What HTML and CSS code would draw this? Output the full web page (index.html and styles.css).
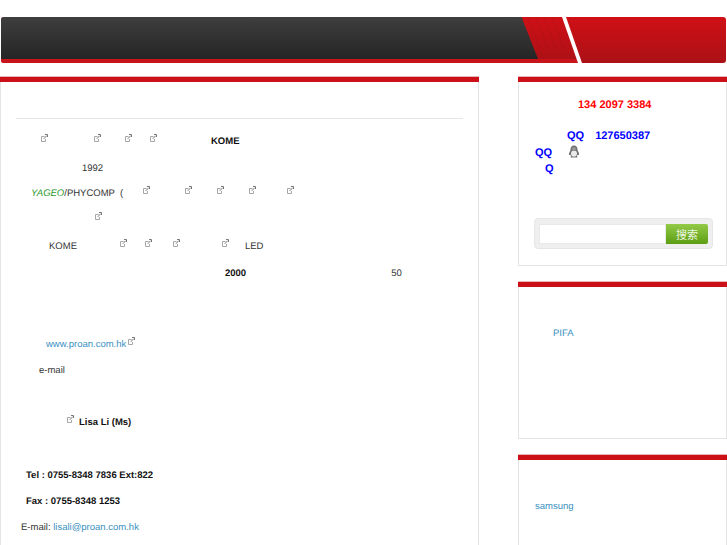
FILE: index.html
```html
<!DOCTYPE html>
<html>
<head>
  <meta charset="UTF-8">
  <title>Proan</title>
  <link rel="stylesheet" href="styles.css">
</head>
<body>
  <svg class="sprite">
    <symbol id="ext" viewBox="0 0 7 8">
      <path d="M3.500 2.500H.5V7.500H4.500V5" fill="none" stroke="#a6a6a6"/>
      <path d="M2.800 4.800L5.800 1.600" fill="none" stroke="#777"/>
      <path d="M4 .5H6.500V3" fill="none" stroke="#777"/>
    </symbol>
  </svg>

  <svg class="banner" viewBox="0 0 725 46" preserveAspectRatio="none">
    <defs>
      <linearGradient id="darkFill" x1="0" y1="0" x2="0" y2="1">
        <stop offset="0" stop-color="#3d3e3d"/>
        <stop offset="1" stop-color="#242524"/>
      </linearGradient>
      <linearGradient id="redFill" x1="0" y1="0" x2="0" y2="1">
        <stop offset="0" stop-color="#cf1016"/>
        <stop offset="1" stop-color="#ab1116"/>
      </linearGradient>
    </defs>
    <rect width="725" height="46" rx="3" fill="url(#redFill)"/>
    <path d="M0 3a3 3 0 0 1 3-3H520.500L537 42H0z" fill="url(#darkFill)"/>
    <path d="M0 42H576V46H3a3 3 0 0 1-3-3z" fill="#c8131a"/>
    <path d="M527 0L543 42M535 0L551 42M543 0L559 42M551 0L567 42" stroke="#a91419" stroke-opacity=".45" fill="none"/>
    <path d="M561 0H565L581 46H577z" fill="#fff"/>
  </svg>

  <div class="page">
    <div class="main box">
      <hr class="rule">

      <div class="line first">
        <svg class="ext ml-25"><use href="#ext"/></svg><svg class="ext ml-46"><use href="#ext"/></svg><svg class="ext ml-24"><use href="#ext"/></svg><svg class="ext ml-18"><use href="#ext"/></svg>
        <b class="ml-54">KOME</b>
      </div>
      <div class="line second"><span class="ml-66">1992</span></div>
      <div class="line third">
        <em class="brand ml-15">YAGEO</em><span>/PHYCOMP</span><span class="ml-5">(</span>
        <svg class="ext ml-20"><use href="#ext"/></svg><svg class="ext ml-35"><use href="#ext"/></svg><svg class="ext ml-25"><use href="#ext"/></svg><svg class="ext ml-25"><use href="#ext"/></svg><svg class="ext ml-31"><use href="#ext"/></svg>
      </div>
      <div class="line"><svg class="ext ml-79"><use href="#ext"/></svg></div>
      <div class="line led">
        <span class="ml-33">KOME</span>
        <svg class="ext ml-43"><use href="#ext"/></svg><svg class="ext ml-18"><use href="#ext"/></svg><svg class="ext ml-21"><use href="#ext"/></svg><svg class="ext ml-42"><use href="#ext"/></svg>
        <span class="ml-16">LED</span>
      </div>
      <div class="line years"><b class="ml-209">2000</b><span class="ml-145">50</span></div>

      <div class="line site"><a class="ml-30" href="#">www.proan.com.hk</a><svg class="ext ml-2"><use href="#ext"/></svg></div>
      <div class="line"><span class="ml-23">e-mail</span></div>
      <div class="line contact"><svg class="ext ml-51"><use href="#ext"/></svg><b class="ml-5">Lisa Li (Ms)</b></div>
      <div class="line phone"><b class="ml-10">Tel : 0755-8348 7836 Ext:822</b></div>
      <div class="line"><b class="ml-10">Fax : 0755-8348 1253</b></div>
      <div class="line"><span class="ml-5">E-mail: <a href="#">lisali@proan.com.hk</a></span></div>
    </div>

    <div class="side">
      <div class="box panel-contact">
        <div class="hotline">134 2097 3384</div>
        <div class="qq qq-first"><span>QQ</span><span class="qq-num">127650387</span></div>
        <div class="qq qq-second">
          <span>QQ</span>
          <svg class="penguin" viewBox="0 0 12 13">
            <path d="M6 .5C3.600.5 2.500 2.300 2.500 4.500c0 1-.4 1.700-1 2.800C.8 8.600.7 9.700 1.300 10c.4.100.7-.2 1-.6.200.7.600 1.200 1.100 1.600-.7.300-1 .7-.8 1.200.3.500 2 .5 3.400.2 1.400.3 3.100.3 3.400-.2.200-.5-.1-.9-.8-1.200.5-.4.900-.9 1.100-1.600.3.400.6.700 1 .6.600-.3.500-1.400-.2-2.700-.6-1.100-1-1.800-1-2.800C9.500 2.300 8.400.5 6 .5z" fill="#6f6f6f"/>
            <ellipse cx="6" cy="8.600" rx="3" ry="3.100" fill="#eaeaea"/>
            <ellipse cx="6" cy="3.800" rx="2" ry="1.900" fill="#989898"/>
          </svg>
        </div>
        <div class="qq qq-third">Q</div>
        <form class="search">
          <input class="search-input" type="text">
          <button class="search-btn" type="button">搜索</button>
        </form>
      </div>

      <div class="box panel-pifa"><a href="#">PIFA</a></div>

      <div class="box panel-samsung"><a href="#">samsung</a></div>
    </div>
  </div>
</body>
</html>
```

FILE: styles.css
```css
body {
  margin: 0;
  padding-top: 17px;
  height: 528px;
  overflow: hidden;
  background: #fff;
  color: #333;
  font-family: "Liberation Sans", Arial, sans-serif;
  font-size: 9.5px;
  text-rendering: geometricPrecision;
}
a {
  color: #3a90c0;
  text-decoration: none;
}
.sprite {
  display: none;
}
.banner {
  display: block;
  width: 725px;
  height: 46px;
  margin-left: 1px;
}
.page {
  display: flex;
  align-items: flex-start;
  margin-top: 14px;
}
.box {
  box-sizing: border-box;
  background: #fff;
  box-shadow: 0 -1px 0 #e9b6b8,
    inset 0 5px 0 #cb1018,
    inset 1px 0 0 #e4e4e4,
    inset -1px 0 0 #e4e4e4,
    inset 0 -1px 0 #e4e4e4;
}

/* main column */
.main {
  width: 479px;
  height: 480px;
  padding: 41px 16px 0;
}
.rule {
  height: 1px;
  margin: 0;
  border: 0;
  background: #e6e6e6;
}
.line {
  display: flex;
  align-items: center;
  height: 26px;
  white-space: pre;
}
.first { margin-top: 9px; }
.second { margin-top: 1px; }
.third { margin-top: -1px; }
.led { margin-top: 1px; }
.years { margin-top: 1px; }
.site { margin-top: 45px; }
.contact { margin-top: 26px; }
.phone { margin-top: 27px; }
.line b { color: #111; }
.brand { color: #2d9a2f; }

/* external link icon */
.ext {
  position: relative;
  top: -3px;
  flex: none;
  width: 7px;
  height: 8px;
}

/* spacers between the words */
.ml-2 { margin-left: 2px; }
.ml-5 { margin-left: 5px; }
.ml-10 { margin-left: 10px; }
.ml-15 { margin-left: 15px; }
.ml-16 { margin-left: 16px; }
.ml-18 { margin-left: 18px; }
.ml-20 { margin-left: 20px; }
.ml-21 { margin-left: 21px; }
.ml-23 { margin-left: 23px; }
.ml-24 { margin-left: 24px; }
.ml-25 { margin-left: 25px; }
.ml-30 { margin-left: 30px; }
.ml-31 { margin-left: 31px; }
.ml-33 { margin-left: 33px; }
.ml-35 { margin-left: 35px; }
.ml-42 { margin-left: 42px; }
.ml-43 { margin-left: 43px; }
.ml-46 { margin-left: 46px; }
.ml-51 { margin-left: 51px; }
.ml-54 { margin-left: 54px; }
.ml-66 { margin-left: 66px; }
.ml-79 { margin-left: 79px; }
.ml-145 { margin-left: 145px; }
.ml-209 { margin-left: 209px; }

/* right column */
.side {
  display: flex;
  flex-direction: column;
  gap: 16px;
  width: 209px;
  margin-left: 39px;
}
.panel-contact {
  height: 189px;
  padding: 22px 0 0 16px;
}
.hotline {
  padding-left: 44px;
  color: #f00;
  font-weight: bold;
  font-size: 11px;
}
.qq {
  color: #00f;
  font-weight: bold;
  font-size: 11px;
}
.qq-first { margin-top: 19px; padding-left: 33px; }
.qq-num { margin-left: 11px; }
.qq-second {
  display: flex;
  align-items: center;
  margin-top: 5px;
  padding-left: 1px;
}
.qq-third { margin-top: 4px; padding-left: 11px; }
.penguin {
  width: 12px;
  height: 13px;
  margin-left: 16px;
  margin-top: -4px;
}
.search {
  display: flex;
  box-sizing: border-box;
  width: 179px;
  height: 31px;
  margin-top: 43px;
  padding: 5px 4px;
  border: 1px solid #e6e6e6;
  border-radius: 4px;
  background: #efefef;
}
.search-input {
  box-sizing: border-box;
  width: 127px;
  height: 20px;
  padding: 0;
  border: 1px solid #e9e9e9;
  background: #fff;
}
.search-btn {
  width: 42px;
  height: 20px;
  padding: 0;
  border: 0;
  border-radius: 0 2px 2px 0;
  background: linear-gradient(#93ca48, #5c9e12);
  color: #eef6e2;
  font-family: "Noto Sans CJK SC", sans-serif;
  font-size: 11px;
}
.panel-pifa {
  height: 157px;
  padding: 46px 0 0 35px;
}
.panel-samsung {
  height: 100px;
  padding: 46px 0 0 17px;
}
```
